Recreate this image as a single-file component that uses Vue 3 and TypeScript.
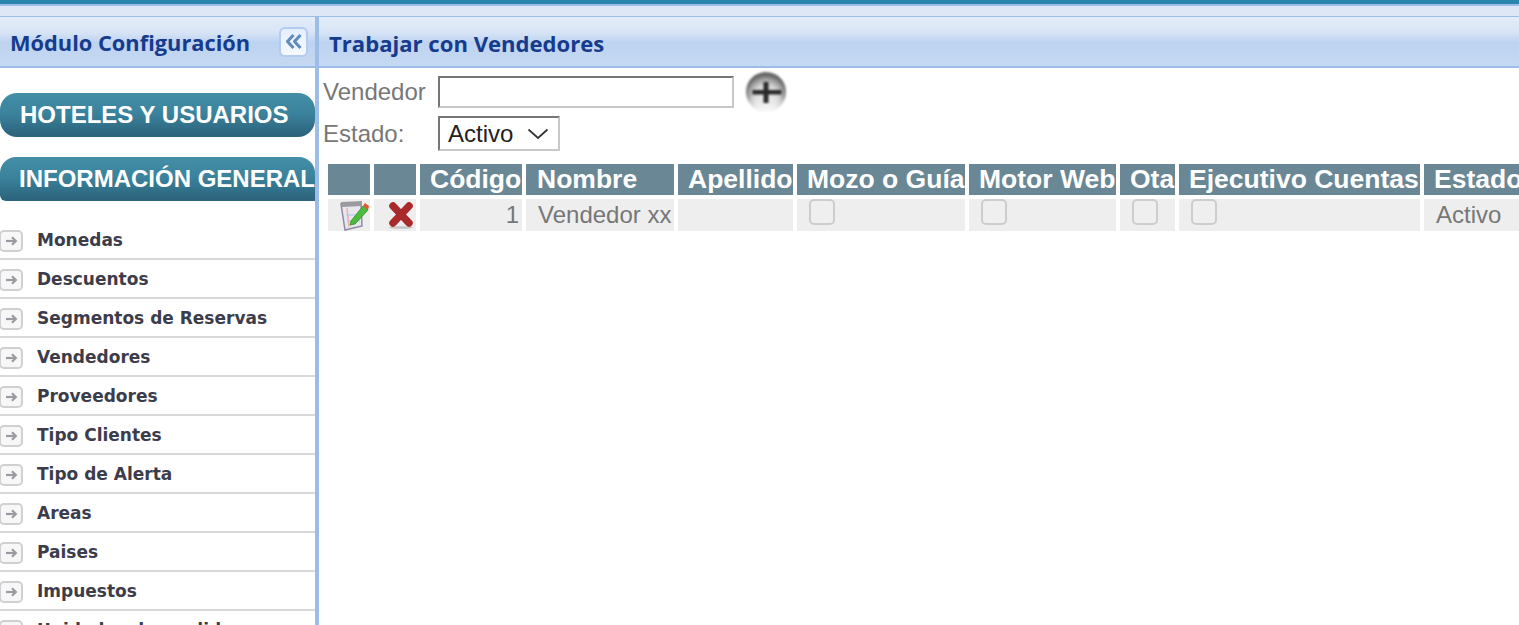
<script setup lang="ts">
const menu: string[] = ['Monedas','Descuentos','Segmentos de Reservas','Vendedores','Proveedores','Tipo Clientes','Tipo de Alerta','Areas','Paises','Impuestos','Unidades de medida']
const columns: string[] = ['','','Código','Nombre','Apellido','Mozo o Guía','Motor Web','Ota','Ejecutivo Cuentas','Estado']
</script>

<template>
  <div class="page">
    <div class="topbar"></div>
    <div class="strip"></div>
    <div class="layout">
      <aside class="sidebar">
        <header class="panel-head side-head">
          <h2>Módulo Configuración</h2>
          <button class="collapse" aria-label="Colapsar">
            <svg class="soft-s" width="18" height="17" viewBox="0 0 18 17" fill="none" stroke="#5f8cba" stroke-width="3" stroke-linejoin="round">
              <path d="M8.500 2 L2.500 8.500 L8.500 15" />
              <path d="M15.500 2 L9.500 8.500 L15.500 15" />
            </svg>
          </button>
        </header>
        <div class="pill first">HOTELES Y USUARIOS</div>
        <div class="pill second">INFORMACIÓN GENERAL</div>
        <ul class="menu">
          <li v-for="item in menu" :key="item">
            <span class="arrow">
              <svg class="soft-s" width="13" height="12" viewBox="0 0 13 12" fill="none" stroke="#9a9aa0" stroke-width="2.200">
                <path d="M1 6 H10" />
                <path d="M7 2.200 L10.800 6 L7 9.800" />
              </svg>
            </span>
            <span class="label">{{ item }}</span>
          </li>
        </ul>
      </aside>
      <main class="content">
        <header class="panel-head main-head"><h2>Trabajar con Vendedores</h2></header>
        <div class="filters">
          <div class="filter-row one">
            <label for="vendedor">Vendedor</label>
            <input id="vendedor" type="text" />
            <svg class="add" width="42" height="40" viewBox="0 0 42 40" aria-label="Agregar">
              <defs>
                <radialGradient id="addFill" cx="50%" cy="62%" r="55%">
                  <stop offset="0%" stop-color="#f2f2f2" />
                  <stop offset="55%" stop-color="#d4d4d4" />
                  <stop offset="78%" stop-color="#a4a4a4" />
                  <stop offset="100%" stop-color="#666" />
                </radialGradient>
                <linearGradient id="addFade" x1="0" y1="0" x2="0" y2="1">
                  <stop offset="0%" stop-color="#fff" stop-opacity="0" />
                  <stop offset="60%" stop-color="#fff" stop-opacity="0" />
                  <stop offset="100%" stop-color="#fff" stop-opacity="1" />
                </linearGradient>
              </defs>
              <circle cx="21" cy="20" r="20" fill="url(#addFill)" />
              <circle cx="21" cy="20" r="20.500" fill="url(#addFade)" />
              <path d="M18.500 10h5v8h13v4.500h-13V31h-5v-8.500H7.500V18h11z" fill="#2a2a2a" />
            </svg>
          </div>
          <div class="filter-row two">
            <label for="estado">Estado:</label>
            <span class="select-wrap">
              <select id="estado"><option>Activo</option><option>Inactivo</option></select>
              <svg width="22" height="12" viewBox="0 0 22 12" fill="none" stroke="#333" stroke-width="1.700"><path d="M1.500 1.500 L11 10 L20.500 1.500"/></svg>
            </span>
          </div>
        </div>
        <table class="grid">
          <colgroup>
            <col style="width:42px" /><col style="width:42px" /><col style="width:102px" /><col style="width:148px" /><col style="width:115px" />
            <col style="width:168px" /><col style="width:147px" /><col style="width:55px" /><col style="width:241px" /><col style="width:110px" />
          </colgroup>
          <thead>
            <tr><th v-for="(c, i) in columns" :key="i"><span>{{ c }}</span></th></tr>
          </thead>
          <tbody>
            <tr>
              <td class="icon-cell edit">
                <svg class="soft" width="32" height="32" viewBox="0 0 32 32">
                  <path d="M3 5 L23 4 L24 27 L7 31 Z" fill="#e8e6ee" stroke="#8f8aa2" stroke-width="1.500"/>
                  <path d="M3 3 L24 2 L24 7 L4 8 Z" fill="#9b9a9f"/>
                  <path d="M9 9 L11 28" stroke="#f0b0a8" stroke-width="1.500"/>
                  <path d="M8 16H22M9 22H22" stroke="#a9c9e2" stroke-width="1"/>
                  <path d="M13 22 L25 7 L30 11 L17 25 L12 26 Z" fill="#4dbb3e" stroke="#2f8c2a" stroke-width=".8"/>
                  <path d="M25 7 L27 4 L31 7 L30 11 Z" fill="#e4572e"/>
                </svg>
              </td>
              <td class="icon-cell del">
                <svg class="soft" width="28" height="28" viewBox="0 0 28 28">
                  <ellipse cx="14" cy="26.500" rx="12" ry="1.300" fill="#c4c4c4"/>
                  <path d="M6 5 L22 22 M22 5 L6 22" stroke="#a82a2a" stroke-width="7.500" stroke-linecap="round" fill="none"/>
                </svg>
              </td>
              <td class="num">1</td>
              <td>Vendedor xx</td>
              <td></td>
              <td class="check"><input type="checkbox" aria-label="Mozo o Guía" /></td>
              <td class="check"><input type="checkbox" aria-label="Motor Web" /></td>
              <td class="check"><input type="checkbox" aria-label="Ota" /></td>
              <td class="check"><input type="checkbox" aria-label="Ejecutivo Cuentas" /></td>
              <td>Activo</td>
            </tr>
          </tbody>
        </table>
      </main>
    </div>
  </div>
</template>

<style>
html, body { margin: 0; overflow: hidden; background: #fff; }
</style>

<style scoped>
.page { width: 1519px; height: 625px; overflow: hidden; display: flex; flex-direction: column; font-family: "Liberation Sans", Arial, sans-serif; }
.topbar { height: 4px; flex: none; background: #2a86ad; border-bottom: 2px solid #9bbde8; }
.strip { height: 10px; flex: none; background: #dde7f6; border-bottom: 1px solid #9bbde8; }
.layout { flex: 1; display: flex; min-height: 0; }
.sidebar { width: 315px; flex: none; border-right: 4px solid #9bbde8; overflow: hidden; }
.content { flex: 1; min-width: 0; overflow: hidden; }
.panel-head { height: 49px; box-sizing: content-box; display: flex; align-items: center; border-bottom: 2px solid #9bbde8;
  background: linear-gradient(#e3ecf9 0%, #d9e5f6 30%, #bdd3f0 52%, #c6d9f3 100%); }
.panel-head h2 { margin: 2px 0 0; font: bold 21.800px "Open Sans", "DejaVu Sans", sans-serif; color: #163a8c; }
.main-head h2 { font-size: 22.100px; }
.side-head { justify-content: space-between; padding: 0 7px 0 10px; }
.main-head { padding-left: 10px; }
.collapse { width: 29px; height: 30px; padding: 0; display: flex; align-items: center; justify-content: center; background: linear-gradient(#e4eefb,#f6faff); border: 2px solid #b3cbee; border-radius: 6px; }
.pill { height: 44px; box-sizing: border-box; display: flex; align-items: center; color: #fff; font-weight: bold; font-size: 24px; white-space: nowrap; overflow: hidden;
  background: linear-gradient(#448ea8 0%, #3b839d 45%, #2f6a83 85%, #2b637a 100%); }
.first { margin-top: 25px; padding-left: 20px; border-radius: 17px; }
.second { margin-top: 20px; padding-left: 19px; border-radius: 16px 16px 0 6px; }
.menu { list-style: none; margin: 20px 0 0; padding: 0; }
.menu li { height: 35px; padding-top: 2px; border-bottom: 2px solid #d9d9d9; display: flex; align-items: center; }
.arrow { width: 24px; height: 22px; box-sizing: border-box; flex: none; margin-left: -1px; display: flex; align-items: center; justify-content: center; border: 2px solid #d0d0d3; border-radius: 5px; background: #f7f7f7; }
.label { margin: 0 0 2px 14px; font: bold 17px "DejaVu Sans", Verdana, sans-serif; color: #3c3c4a; white-space: nowrap; }
.filters { padding: 8px 0 0 4px; }
.filter-row { display: flex; align-items: center; color: #777; font-size: 24px; }
.filter-row label { width: 115px; flex: none; }
.one { height: 32px; }
.two { height: 35px; margin-top: 8px; }
input[type="text"] { width: 296px; height: 32px; box-sizing: border-box; margin: 0; padding: 0; border: 2px solid; border-color: #767676 #c8c8c8 #c8c8c8 #767676; background: #fff; }
.add { flex: none; margin: 0 0 0 11px; filter: blur(.8px); }
.select-wrap { position: relative; display: block; width: 122px; height: 35px; }
select { appearance: none; width: 100%; height: 100%; margin: 0; padding: 0 0 0 8px; box-sizing: border-box; font: 24px "Liberation Sans", sans-serif; color: #222; background: #fff; border: 2px solid; border-color: #767676 #c8c8c8 #c8c8c8 #767676; border-radius: 0; }
.select-wrap svg { position: absolute; right: 11px; top: 12px; pointer-events: none; }
.grid { table-layout: fixed; width: 1195px; border-collapse: separate; border-spacing: 4px; margin: 9px 0 0 5px; }
th { height: 31px; padding: 0; background: #6a8795; color: #fff; font-size: 26.500px; font-weight: bold; text-align: left; white-space: nowrap; overflow: hidden; }
th span { padding-left: 10px; }
th:nth-child(4) span { padding-left: 11px; }
td { height: 32px; padding: 0 0 0 12px; background: #eee; color: #777; font-size: 24px; vertical-align: middle; white-space: nowrap; overflow: hidden; }
td.num { text-align: right; padding: 0 3px 0 0; }
td.icon-cell { text-align: left; line-height: 0; }
td.edit { padding: 0 0 0 10px; }
td.del { padding: 0 0 0 13px; }
td.check { vertical-align: top; }
input[type="checkbox"] { appearance: none; display: block; width: 26px; height: 26px; margin: 0; box-sizing: border-box; border: 2px solid #cdcdcd; border-radius: 5px; background: #efefef; }
.soft { filter: blur(.5px); }
.soft-s { filter: blur(.4px); }
</style>
